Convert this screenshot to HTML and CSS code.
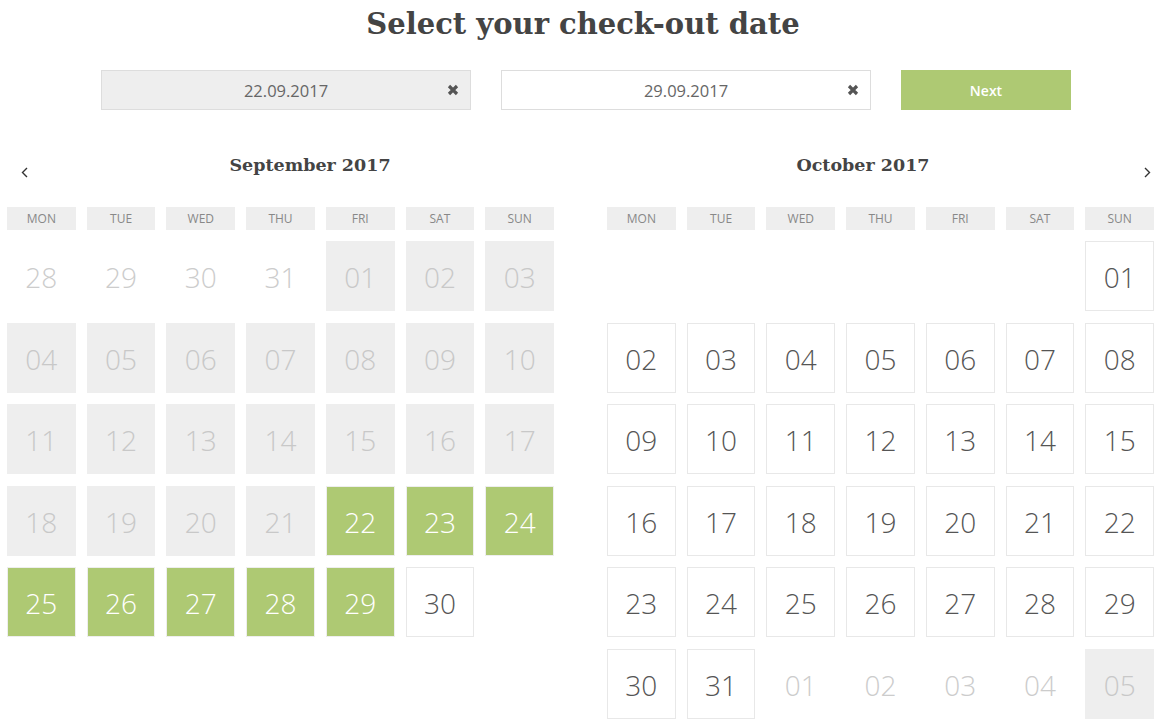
FILE: index.html
```html
<!DOCTYPE html>
<html lang="en">
<head>
    <meta charset="UTF-8">
    <meta name="viewport" content="width=device-width, initial-scale=1.0">
    <title>Select your check-out date</title>
    <link rel="stylesheet" href="styles.css">
</head>
<body>
    <h1 class="page-title">Select your check-out date</h1>

    <div class="date-bar">
        <div class="date-field filled">
            <span class="date-value">22.09.2017</span>
            <span class="clear">
                <svg width="12" height="12" viewBox="0 0 12 12"><path d="M2 2 L10 10 M10 2 L2 10" stroke="#555" stroke-width="3.2"/></svg>
            </span>
        </div>
        <div class="date-field">
            <span class="date-value">29.09.2017</span>
            <span class="clear">
                <svg width="12" height="12" viewBox="0 0 12 12"><path d="M2 2 L10 10 M10 2 L2 10" stroke="#555" stroke-width="3.2"/></svg>
            </span>
        </div>
        <button class="next-btn">Next</button>
    </div>

    <div class="calendars">
        <div class="month">
            <div class="month-head">
                <span class="nav prev">
                    <svg width="7" height="11" viewBox="0 0 7 11"><path d="M6 1 L1.5 5.5 L6 10" fill="none" stroke="#333" stroke-width="1.4"/></svg>
                </span>
                <h3 class="month-title">September 2017</h3>
            </div>
            <div class="weekdays">
                <span>Mon</span><span>Tue</span><span>Wed</span><span>Thu</span><span>Fri</span><span>Sat</span><span>Sun</span>
            </div>
            <div class="days">
                <span class="day out">28</span>
                <span class="day out">29</span>
                <span class="day out">30</span>
                <span class="day out">31</span>
                <span class="day off">01</span>
                <span class="day off">02</span>
                <span class="day off">03</span>

                <span class="day off">04</span>
                <span class="day off">05</span>
                <span class="day off">06</span>
                <span class="day off">07</span>
                <span class="day off">08</span>
                <span class="day off">09</span>
                <span class="day off">10</span>

                <span class="day off">11</span>
                <span class="day off">12</span>
                <span class="day off">13</span>
                <span class="day off">14</span>
                <span class="day off">15</span>
                <span class="day off">16</span>
                <span class="day off">17</span>

                <span class="day off">18</span>
                <span class="day off">19</span>
                <span class="day off">20</span>
                <span class="day off">21</span>
                <span class="day picked">22</span>
                <span class="day picked">23</span>
                <span class="day picked">24</span>

                <span class="day picked">25</span>
                <span class="day picked">26</span>
                <span class="day picked">27</span>
                <span class="day picked">28</span>
                <span class="day picked">29</span>
                <span class="day">30</span>
            </div>
        </div>

        <div class="month">
            <div class="month-head">
                <h3 class="month-title">October 2017</h3>
                <span class="nav next">
                    <svg width="7" height="11" viewBox="0 0 7 11"><path d="M1 1 L5.5 5.5 L1 10" fill="none" stroke="#333" stroke-width="1.4"/></svg>
                </span>
            </div>
            <div class="weekdays">
                <span>Mon</span><span>Tue</span><span>Wed</span><span>Thu</span><span>Fri</span><span>Sat</span><span>Sun</span>
            </div>
            <div class="days">
                <span class="day empty"></span>
                <span class="day empty"></span>
                <span class="day empty"></span>
                <span class="day empty"></span>
                <span class="day empty"></span>
                <span class="day empty"></span>
                <span class="day">01</span>

                <span class="day">02</span>
                <span class="day">03</span>
                <span class="day">04</span>
                <span class="day">05</span>
                <span class="day">06</span>
                <span class="day">07</span>
                <span class="day">08</span>

                <span class="day">09</span>
                <span class="day">10</span>
                <span class="day">11</span>
                <span class="day">12</span>
                <span class="day">13</span>
                <span class="day">14</span>
                <span class="day">15</span>

                <span class="day">16</span>
                <span class="day">17</span>
                <span class="day">18</span>
                <span class="day">19</span>
                <span class="day">20</span>
                <span class="day">21</span>
                <span class="day">22</span>

                <span class="day">23</span>
                <span class="day">24</span>
                <span class="day">25</span>
                <span class="day">26</span>
                <span class="day">27</span>
                <span class="day">28</span>
                <span class="day">29</span>

                <span class="day">30</span>
                <span class="day">31</span>
                <span class="day out">01</span>
                <span class="day out">02</span>
                <span class="day out">03</span>
                <span class="day out">04</span>
                <span class="day off">05</span>
            </div>
        </div>
    </div>
</body>
</html>
```

FILE: styles.css
```css
body {
    margin: 0;
    font-family: "Open Sans", Arial, sans-serif;
    color: #555;
    background: #fff;
}
.page-title {
    margin: 0;
    padding-top: 2px;
    font-family: "DejaVu Serif", Georgia, serif;
    font-size: 29px;
    font-weight: bold;
    line-height: 44px;
    color: #444;
    text-align: center;
}
.date-bar {
    display: flex;
    gap: 30px;
    margin-top: 24px;
    padding-left: 101px;
}
.date-field {
    position: relative;
    box-sizing: border-box;
    width: 370px;
    height: 40px;
    border: 1px solid #ddd;
    background: #fff;
    display: flex;
    align-items: center;
    justify-content: center;
}
.date-field.filled {
    background: #eee;
}
.date-value {
    font-size: 16.5px;
    color: #666;
}
.clear {
    position: absolute;
    right: 11px;
    top: 13px;
    display: flex;
}
.next-btn {
    width: 170px;
    height: 40px;
    border: none;
    background: #aec973;
    color: #fff;
    font-family: "Open Sans", Arial, sans-serif;
    font-size: 14px;
    font-weight: 600;
    cursor: pointer;
}
.calendars {
    display: flex;
    gap: 53px;
    margin-top: 40px;
    padding-left: 7px;
}
.month {
    width: 547px;
}
.month-head {
    display: flex;
    align-items: center;
    height: 30px;
}
.month-title {
    flex: 1;
    margin: 0;
    font-family: "DejaVu Serif", Georgia, serif;
    font-size: 17.5px;
    font-weight: bold;
    color: #444;
    text-align: center;
}
.nav {
    display: flex;
    align-items: center;
    height: 30px;
    padding-top: 14px;
}
.nav.prev {
    width: 45px;
    padding-left: 14px;
}
.nav.next {
    width: 35px;
    justify-content: flex-end;
    padding-right: 3px;
    box-sizing: border-box;
}
.weekdays {
    display: grid;
    grid-template-columns: repeat(7, 1fr);
    column-gap: 11px;
    margin-top: 27px;
}
.weekdays span {
    height: 23px;
    line-height: 23px;
    background: #eee;
    font-size: 12px;
    color: #888;
    text-transform: uppercase;
    text-align: center;
}
.days {
    display: grid;
    grid-template-columns: repeat(7, 1fr);
    grid-auto-rows: 70px;
    column-gap: 11px;
    row-gap: 11.5px;
    margin-top: 11px;
}
.day {
    box-sizing: border-box;
    display: flex;
    align-items: center;
    justify-content: center;
    padding-top: 2px;
    border: 1px solid #e8e8e8;
    font-size: 28px;
    font-weight: 300;
    color: #555;
}
.day.out {
    border-color: transparent;
    color: #ccc;
}
.day.off {
    border-color: #eee;
    background: #eee;
    color: #c8c8c8;
}
.day.picked {
    border-color: #eee;
    background: #aec973;
    color: #fff;
}
.day.empty {
    border-color: transparent;
}
```
